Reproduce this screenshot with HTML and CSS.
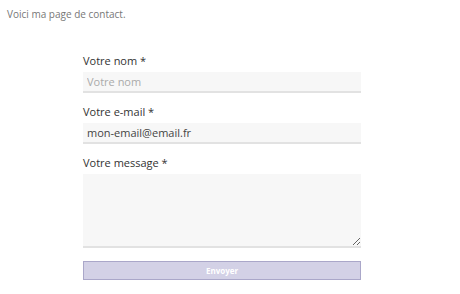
FILE: index.html
```html
<!DOCTYPE html>
<html lang="fr">
<head>
<meta charset="utf-8">
<link rel="stylesheet" href="styles.css">
</head>
<body>
<p class="intro">Voici ma page de contact.</p>
<form class="contact">
  <label class="field">
    <span class="label">Votre nom *</span>
    <input class="input" type="text" placeholder="Votre nom">
  </label>
  <label class="field">
    <span class="label">Votre e-mail *</span>
    <input class="input" type="text" value="mon-email@email.fr">
  </label>
  <label class="field">
    <span class="label">Votre message *</span>
    <textarea class="input textarea"></textarea>
  </label>
  <button class="submit" type="button">Envoyer</button>
</form>
</body>
</html>
```
FILE: styles.css
```css
html, body {
  margin: 0;
  padding: 0;
  background: #fff;
}
body {
  padding: 7px 7px;
}
.intro {
  margin: 0;
  font-family: "Open Sans", sans-serif;
  font-size: 10px;
  line-height: 14px;
  color: #777;
}
.contact {
  width: 278px;
  margin: 32px 0 0 76px;
  display: flex;
  flex-direction: column;
}
.field {
  display: flex;
  flex-direction: column;
  margin-bottom: 11px;
}
.label {
  font-family: "Open Sans", sans-serif;
  font-size: 11px;
  line-height: 15px;
  color: #333;
  margin-bottom: 4px;
}
.input {
  box-sizing: border-box;
  height: 21px;
  width: 100%;
  border: none;
  border-bottom: 2px solid #e2e2e2;
  background: #f7f7f7;
  padding: 0 4px;
  font-family: "Open Sans", sans-serif;
  font-size: 11px;
  color: #444;
  margin: 0;
  outline: none;
}
.input::placeholder {
  color: #aaa;
}
.textarea {
  height: 74px;
  resize: vertical;
  display: block;
}
.submit {
  margin-top: 2px;
  height: 19px;
  box-sizing: border-box;
  width: 100%;
  background: #d3d1e6;
  border: 1px solid #aaa7c9;
  color: #fff;
  font-family: "Open Sans", sans-serif;
  font-weight: bold;
  font-size: 8px;
  padding: 0;
}
```
